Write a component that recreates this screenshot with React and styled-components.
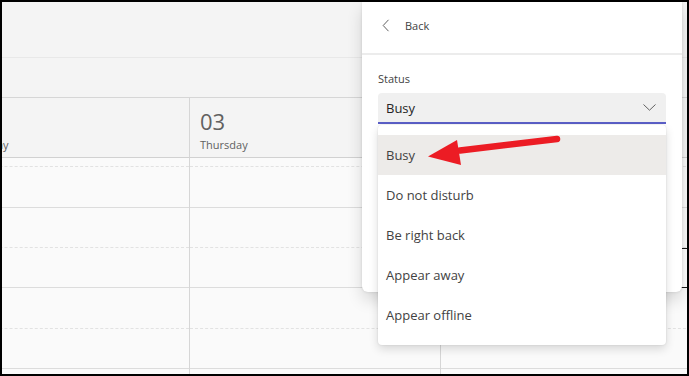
import styled, { createGlobalStyle } from "styled-components";

const GlobalStyle = createGlobalStyle`
  body {
    margin: 0;
    background: #fff;
    font-family: "Open Sans", "Noto Sans", sans-serif;
  }
`;

const Frame = styled.div`
  position: relative;
  width: 689px;
  height: 376px;
  box-sizing: border-box;
  border: 2px solid #000;
  overflow: hidden;
  background: #fafafa;
`;

const TopBar = styled.div`
  height: 55px;
  background: #f4f4f4;
  border-bottom: 1px solid #e8e8e8;
`;

const SubBar = styled.div`
  height: 39px;
  background: #f4f4f4;
  border-bottom: 1px solid #d6d6d6;
`;

const Columns = styled.div`
  display: grid;
  grid-template-columns: repeat(3, 251px);
  margin-left: -63px;
`;

const DayHead = styled.div`
  height: 49px;
  padding: 10px 0 0 10px;
  background: #f4f4f4;
  border-right: 1px solid #d6d6d6;
  border-bottom: 1px solid #d1d1d1;
  color: #616161;
`;

const DayNum = styled.div`
  font-size: 22px;
  line-height: 26px;
`;

const DayName = styled.div`
  font-size: 11px;
  line-height: 16px;
  margin-top: 3px;
`;

const DayBody = styled.div`
  border-right: 1px solid #d6d6d6;
  background: #fafafa;
`;

const Slot = styled.div`
  height: ${(p) => p.$h}px;
  box-sizing: border-box;
  border-bottom: 1px ${(p) => (p.$dashed ? "dashed #e2e2e2" : "solid #dcdcdc")};
`;

const FocusBox = styled.div`
  position: absolute;
  left: 638px;
  top: 246px;
  width: 60px;
  height: 40px;
  box-sizing: border-box;
  border: 1px solid #1a1a1a;
  background: #fff;
`;

const Panel = styled.div`
  position: absolute;
  left: 360px;
  top: 0;
  width: 320px;
  height: 290px;
  background: #fff;
  border-radius: 0 0 6px 6px;
  box-shadow: 0 8px 16px rgba(0, 0, 0, 0.14), 0 0 3px rgba(0, 0, 0, 0.12);
  color: #424242;
`;

const BackRow = styled.div`
  display: flex;
  align-items: center;
  gap: 15px;
  height: 46px;
  padding: 0 0 5px 20px;
  border-bottom: 2px solid #ececec;
  font-size: 11px;
`;

const PanelBody = styled.div`
  position: relative;
  padding: 16px 16px 0;
`;

const Label = styled.div`
  font-size: 11px;
  line-height: 16px;
  margin-bottom: 6px;
`;

const Select = styled.div`
  display: flex;
  align-items: center;
  justify-content: space-between;
  height: 31px;
  box-sizing: border-box;
  padding: 0 10px 0 8px;
  background: #f0f0f0;
  border-radius: 4px 4px 0 0;
  border-bottom: 2px solid #5b5fc7;
  font-size: 13px;
  color: #242424;
`;

const Menu = styled.div`
  position: absolute;
  left: 16px;
  top: 70px;
  width: 288px;
  padding: 10px 0;
  background: #fff;
  border-radius: 4px;
  box-shadow: 0 4px 10px rgba(0, 0, 0, 0.14), 0 0 2px rgba(0, 0, 0, 0.12);
`;

const Option = styled.div`
  display: flex;
  align-items: center;
  height: 40px;
  padding-left: 8px;
  font-size: 13px;
  color: #424242;
  background: ${(p) => (p.$active ? "#edebe9" : "transparent")};
`;

const Arrow = styled.svg`
  position: absolute;
  left: 0;
  top: 0;
  pointer-events: none;
`;

const days = [
  { num: "02", name: "Wednesday" },
  { num: "03", name: "Thursday" },
  { num: "04", name: "Friday" },
];

const slots = [
  [9, true],
  [41, false],
  [40, true],
  [40, false],
  [41, true],
  [40, false],
  [40, true],
];

const options = ["Busy", "Do not disturb", "Be right back", "Appear away", "Appear offline"];

export default function App() {
  return (
    <>
      <GlobalStyle />
      <Frame>
        <TopBar />
        <SubBar />
        <Columns>
          {days.map((d) => (
            <DayHead key={d.num}>
              <DayNum>{d.num}</DayNum>
              <DayName>{d.name}</DayName>
            </DayHead>
          ))}
          {days.map((d) => (
            <DayBody key={d.num + "b"}>
              {slots.map(([h, dashed], i) => (
                <Slot key={i} $h={h} $dashed={dashed} />
              ))}
            </DayBody>
          ))}
        </Columns>
        <FocusBox />
        <Panel>
          <BackRow>
            <svg width="8" height="13" viewBox="0 0 8 13">
              <path d="M6.5 0.8 L1.2 6.5 L6.5 12.2" fill="none" stroke="#616161" strokeWidth="1" />
            </svg>
            <span>Back</span>
          </BackRow>
          <PanelBody>
            <Label>Status</Label>
            <Select>
              <span>Busy</span>
              <svg width="13" height="7" viewBox="0 0 13 7">
                <path d="M0.5 0.5 L6.5 6.2 L12.5 0.5" fill="none" stroke="#616161" strokeWidth="1" />
              </svg>
            </Select>
            <Menu>
              {options.map((o, i) => (
                <Option key={o} $active={i === 0}>
                  {o}
                </Option>
              ))}
            </Menu>
          </PanelBody>
        </Panel>
        <Arrow width="685" height="372" viewBox="2 2 685 372">
          <line x1="460" y1="150.5" x2="557" y2="139" stroke="#ec1c24" strokeWidth="6.5" strokeLinecap="round" />
          <polygon points="428,156.5 457,140 461,165" fill="#ec1c24" />
        </Arrow>
      </Frame>
    </>
  );
}
